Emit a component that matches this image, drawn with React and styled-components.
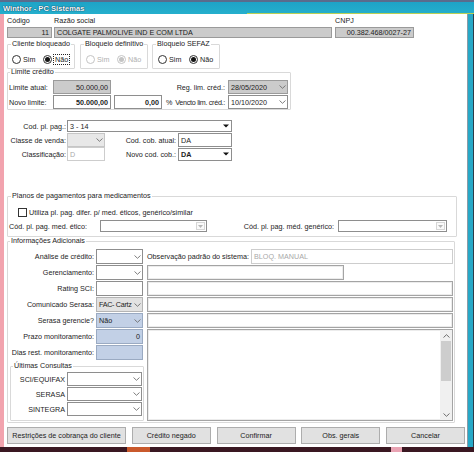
import React from 'react';
import styled, { createGlobalStyle, css } from 'styled-components';

const GlobalStyle = createGlobalStyle`
  html, body { margin: 0; padding: 0; background: #26a6c6; }
  body { font-family: "Liberation Sans", Arial, sans-serif; font-size: 7.2px; color: #1c1c1c; }
  * { box-sizing: border-box; }
`;

const Screen = styled.div`
  width: 474px;
  height: 452px;
  overflow: hidden;
  display: grid;
  grid-template-rows: 14px 433px 5px;
  background: #26a6c6;
`;

const TitleBar = styled.div`
  display: flex;
  align-items: center;
  padding: 2px 0 0 3px;
  background:
    linear-gradient(to right, transparent 247px, #b9cf55 247px) bottom / 100% 1px no-repeat,
    linear-gradient(to bottom, #5a6c8c 0, #5a6c8c 2px, #1ea3c6 2px, #25afcc 100%);
  font-weight: bold;
  font-size: 7.6px;
  color: #f2fbff;
  text-shadow: 0 0 1px #0a3550, 0 0 1px #0a3550;
  white-space: nowrap;
`;

const Body = styled.div`
  display: flex;
`;

const LeftFrame = styled.div`
  width: 4px;
  background: #f2a3ae;
`;

const RightFrame = styled.div`
  width: 7px;
  border-left: 1px solid #8b9ba6;
  border-right: 1px solid #2b3b48;
  background: #27a8c7;
`;

const Client = styled.div`
  width: 463px;
  background: #fff;
  padding: 2px 0 0 3px;
  display: flex;
  flex-direction: column;
`;

const Taskbar = styled.div`
  display: flex;
  background: #3a1822;
`;

const TaskChip = styled.div`
  margin-left: ${p => p.$ml}px;
  width: ${p => p.$w}px;
  background: ${p => p.$c};
`;

/* ---------- generic controls ---------- */

const tones = {
  white: { bg: '#ffffff', bd: '#8e8e8e', fg: '#1c1c1c' },
  gray: { bg: '#cbcbcb', bd: '#9a9a9a', fg: '#1c1c1c' },
  light: { bg: '#e2e2e2', bd: '#b4b4b4', fg: '#1c1c1c' },
  blue: { bg: '#c2d0e6', bd: '#9aaac2', fg: '#1c1c1c' },
  disabled: { bg: '#ffffff', bd: '#cdcdcd', fg: '#a9a9a9' },
  dimmed: { bg: '#e8e8e8', bd: '#c6c6c6', fg: '#a9a9a9' },
  edit: { bg: '#ffffff', bd: '#a4a4a4', fg: '#1c1c1c' },
};

const Box = styled.div`
  flex: ${p => (p.$w ? 'none' : '1')};
  width: ${p => (p.$w ? `${p.$w}px` : 'auto')};
  height: ${p => p.$h || 12}px;
  margin-left: ${p => p.$ml || 0}px;
  border: 1px solid ${p => tones[p.$tone || 'white'].bd};
  background: ${p => tones[p.$tone || 'white'].bg};
  color: ${p => tones[p.$tone || 'white'].fg};
  font-weight: ${p => (p.$bold ? 'bold' : 'normal')};
  display: flex;
  align-items: center;
  justify-content: ${p => (p.$right ? 'flex-end' : 'flex-start')};
  padding: 0 ${p => (p.$combo ? 0 : 2)}px 0 ${p => (p.$combo ? 1 : 2)}px;
  white-space: nowrap;
  overflow: hidden;
  ${p => p.$tone === 'edit' && css`box-shadow: inset 0 0 0 1px #ececec;`}
`;

const ComboText = styled.span`
  flex: 1;
  overflow: hidden;
  padding-left: 1px;
  letter-spacing: ${p => (p.$tight ? '-0.3px' : '0')};
`;

const ArrowSlot = styled.span`
  flex: none;
  width: 10px;
  height: 100%;
  display: flex;
  align-items: center;
  justify-content: center;
  ${p => p.$kind === 'faint' && css`
    width: 9px;
    height: calc(100% - 2px);
    margin-right: 1px;
    border: 1px solid #d6d6d6;
    background: #fafafa;
  `}
`;

const Arrow = ({ kind }) => {
  if (kind === 'button') {
    return (
      <ArrowSlot $kind={kind}>
        <svg width="6" height="4" viewBox="0 0 6 4"><path d="M0 0.5H6L3 3.5Z" fill="#111" /></svg>
      </ArrowSlot>
    );
  }
  if (kind === 'faint') {
    return (
      <ArrowSlot $kind={kind}>
        <svg width="5" height="3" viewBox="0 0 5 3"><path d="M0 0H5L2.5 3Z" fill="#b8b8b8" /></svg>
      </ArrowSlot>
    );
  }
  return (
    <ArrowSlot $kind={kind}>
      <svg width="7" height="4" viewBox="0 0 7 4"><path d="M0.5 0.5L3.5 3.3L6.5 0.5" fill="none" stroke="#6f6f6f" strokeWidth="0.9" /></svg>
    </ArrowSlot>
  );
};

const Combo = ({ w, h, tone, kind = 'chevron', bold, ml, tight, children }) => (
  <Box $w={w} $h={h} $tone={tone} $bold={bold} $ml={ml} $combo>
    <ComboText $tight={tight}>{children}</ComboText>
    <Arrow kind={kind} />
  </Box>
);

const Lbl = styled.span`
  flex: ${p => (p.$w ? 'none' : '1')};
  width: ${p => (p.$w ? `${p.$w}px` : 'auto')};
  margin-left: ${p => p.$ml || 0}px;
  padding-right: ${p => p.$pr || 0}px;
  text-align: ${p => (p.$right ? 'right' : 'left')};
  color: ${p => (p.$dim ? '#a9a9a9' : '#1c1c1c')};
  letter-spacing: ${p => (p.$tight ? '-0.3px' : '0')};
  white-space: nowrap;
`;

const Row = styled.div`
  display: flex;
  align-items: center;
  height: ${p => p.$h}px;
  margin-top: ${p => p.$mt || 0}px;
  padding-left: ${p => p.$pl || 0}px;
  padding-right: ${p => p.$pr || 0}px;
`;

const Group = styled.fieldset`
  margin: ${p => p.$mt || 0}px 0 0 ${p => p.$ml || 0}px;
  padding: ${p => p.$pt || 0}px 0 ${p => p.$pb || 0}px 0;
  width: ${p => p.$w}px;
  min-width: 0;
  border: 1px solid #d9d9d9;
  border-radius: 1px;
  flex: none;
`;

const Legend = styled.legend`
  margin-left: ${p => p.$ml ?? 2}px;
  padding: 0 1px;
  line-height: 6px;
  height: 6px;
  font-size: 7.2px;
  white-space: nowrap;
  color: #1c1c1c;
`;

/* ---------- header ---------- */

const HeaderRow = styled.div`
  display: flex;
`;

const FieldCol = styled.div`
  display: flex;
  flex-direction: column;
  gap: 1px;
  width: ${p => p.$w}px;
  margin-left: ${p => p.$ml || 0}px;
`;

const Caption = styled.div`
  height: 10px;
  line-height: 10px;
  white-space: nowrap;
`;

/* ---------- radios ---------- */

const GroupRow = styled.div`
  display: flex;
  margin-top: 3px;
`;

const RadioLine = styled.div`
  display: flex;
  align-items: center;
  height: 10px;
  padding-left: ${p => p.$pl}px;
`;

const RadioItem = styled.label`
  display: flex;
  align-items: center;
  gap: 2px;
  width: ${p => (p.$w ? `${p.$w}px` : 'auto')};
  color: ${p => (p.$disabled ? '#b0b0b0' : '#1c1c1c')};
`;

const RadioDot = styled.span`
  width: 9px;
  height: 9px;
  border-radius: 50%;
  border: 1px solid ${p => (p.$disabled ? '#c4c4c4' : '#333')};
  background: #fff;
  display: inline-flex;
  align-items: center;
  justify-content: center;
  flex: none;
  &::after {
    content: '';
    width: 5px;
    height: 5px;
    border-radius: 50%;
    background: ${p => (p.$disabled ? '#c4c4c4' : '#141414')};
    display: ${p => (p.$on ? 'block' : 'none')};
  }
`;

const Focus = styled.span`
  outline: 1px dotted #222;
  outline-offset: 0;
  padding: 0 1px;
  line-height: 9px;
`;

const Radio = ({ on, disabled, focus, w, children }) => (
  <RadioItem $disabled={disabled} $w={w}>
    <RadioDot $on={on} $disabled={disabled} />
    {focus ? <Focus>{children}</Focus> : <span>{children}</span>}
  </RadioItem>
);

const RadioGroup = ({ title, ml, pl, active, disabled, focus }) => (
  <Group $w={68} $ml={ml} $pt={7} $pb={4}>
    <Legend $ml={3}>{title}</Legend>
    <RadioLine $pl={pl}>
      <Radio w={31} disabled={disabled} on={active === 'sim'}>Sim</Radio>
      <Radio disabled={disabled} on={active === 'nao'} focus={focus}>Não</Radio>
    </RadioLine>
  </Group>
);

/* ---------- checkbox ---------- */

const CheckBox = styled.span`
  width: 9px;
  height: 9px;
  border: 1px solid #333;
  background: #fff;
  flex: none;
  margin-right: 2px;
`;

/* ---------- info grid ---------- */

const InfoGrid = styled.div`
  display: grid;
  grid-template-columns: 88px 51px 306px;
  grid-template-rows: repeat(7, 15px) auto;
  row-gap: 1px;
`;

const GridLbl = styled.span`
  grid-column: 1;
  text-align: right;
  padding-right: 2px;
  align-self: center;
  white-space: nowrap;
`;

const GridField = styled.div`
  grid-column: 2;
  display: flex;
  width: 47px;
`;

const GridRight = styled.div`
  grid-column: 3;
  display: flex;
  align-items: center;
`;

const Memo = styled.div`
  grid-column: 3;
  grid-row: 6 / span 3;
  height: 92px;
  align-self: start;
  border: 1px solid #a4a4a4;
  box-shadow: inset 0 0 0 1px #ececec;
  background: #fff;
  display: flex;
  justify-content: flex-end;
`;

const ScrollBar = styled.div`
  width: 12px;
  background: #f0f0f0;
  display: flex;
  flex-direction: column;
`;

const ScrollBtn = styled.div`
  height: 11px;
  display: flex;
  align-items: center;
  justify-content: center;
`;

const ScrollTrack = styled.div`
  flex: 1;
  display: flex;
  justify-content: center;
`;

const Thumb = styled.div`
  width: 10px;
  height: 40px;
  background: #cdcdcd;
`;

const Consultas = styled(Group)`
  grid-column: 1 / span 2;
  grid-row: 8;
`;

/* ---------- buttons ---------- */

const ButtonBar = styled.div`
  display: flex;
  justify-content: space-between;
  width: 458px;
  margin-top: 4px;
`;

const Button = styled.button`
  width: ${p => p.$w}px;
  height: 17px;
  padding: 0;
  border: 1px solid #adadad;
  background: #e1e1e1;
  font-family: "Liberation Sans", Arial, sans-serif;
  font-size: 7.2px;
  color: #1c1c1c;
  white-space: nowrap;
`;

export default function App() {
  return (
    <>
      <GlobalStyle />
      <Screen>
        <TitleBar>Winthor - PC Sistemas</TitleBar>
        <Body>
          <LeftFrame />
          <Client>
            <HeaderRow>
              <FieldCol $w={45}>
                <Caption>Código</Caption>
                <Box $tone="gray" $right>11</Box>
              </FieldCol>
              <FieldCol $w={278} $ml={2}>
                <Caption>Razão social</Caption>
                <Box $tone="gray">COLGATE PALMOLIVE IND E COM LTDA</Box>
              </FieldCol>
              <FieldCol $w={79} $ml={3}>
                <Caption>CNPJ</Caption>
                <Box $tone="gray" $right>00.382.468/0027-27</Box>
              </FieldCol>
            </HeaderRow>

            <GroupRow>
              <RadioGroup title="Cliente bloqueado" pl={4} active="nao" focus />
              <RadioGroup title="Bloqueio definitivo" ml={5} pl={5} active="nao" disabled />
              <RadioGroup title="Bloqueio SEFAZ" ml={4} pl={5} active="nao" />
            </GroupRow>

            <Group $w={284} $pt={5} $pb={0}>
              <Legend $ml={2}>Limite crédito</Legend>
              <Row $h={14} $pl={1} $pr={2}>
                <Lbl $w={44}>Limite atual:</Lbl>
                <Box $w={58} $h={14} $tone="gray" $right>50.000,00</Box>
                <Lbl $right $pr={3}>Reg. lim. créd.:</Lbl>
                <Combo w={60} h={14} tone="gray">28/05/2020</Combo>
              </Row>
              <Row $h={14} $mt={1} $pl={1} $pr={2}>
                <Lbl $w={44}>Novo limite:</Lbl>
                <Box $w={58} $h={14} $bold $right>50.000,00</Box>
                <Box $w={48} $h={14} $ml={3} $bold $right>0,00</Box>
                <Lbl $w={6} $ml={4}>%</Lbl>
                <Lbl $right $pr={3} $tight>Vencto lim. créd.:</Lbl>
                <Combo w={60} h={14}>10/10/2020</Combo>
              </Row>
            </Group>

            <Row $h={12} $mt={10}>
              <Lbl $w={60} $right $pr={1}>Cod. pl. pag.:</Lbl>
              <Combo w={165} h={12} kind="button">3 - 14</Combo>
            </Row>
            <Row $h={14} $mt={1}>
              <Lbl $w={60} $right $pr={1}>Classe de venda:</Lbl>
              <Combo w={38} h={14} tone="dimmed"></Combo>
              <Lbl $w={73} $right $pr={2}>Cod. cob. atual:</Lbl>
              <Box $w={54} $h={14}>DA</Box>
            </Row>
            <Row $h={14}>
              <Lbl $w={60} $right $pr={1}>Classificação:</Lbl>
              <Box $w={38} $h={14} $tone="disabled">D</Box>
              <Lbl $w={73} $right $pr={2}>Novo cod. cob.:</Lbl>
              <Combo w={54} h={13} kind="button" bold>DA</Combo>
            </Row>

            <Group $w={450} $mt={32} $pt={8} $pb={4}>
              <Legend $ml={3}>Planos de pagamentos para medicamentos</Legend>
              <Row $h={10} $pl={10}>
                <CheckBox />
                <span>Utiliza pl. pag. difer. p/ med. éticos, genérico/similar</span>
              </Row>
              <Row $h={12} $mt={3} $pl={1} $pr={9}>
                <Lbl $w={91}>Cód. pl. pag. med. ético:</Lbl>
                <Combo w={107} h={12} kind="faint" tone="white"></Combo>
                <Lbl $right $pr={4}>Cód. pl. pag. méd. genérico:</Lbl>
                <Combo w={109} h={12} kind="faint" tone="white"></Combo>
              </Row>
            </Group>

            <Group $w={448} $mt={1} $pt={5} $pb={1}>
              <Legend $ml={2}>Informações Adicionais</Legend>
              <InfoGrid>
                <GridLbl>Análise de crédito:</GridLbl>
                <GridField><Combo w={47} h={15}></Combo></GridField>
                <GridRight>
                  <Lbl $w={104}>Observação padrão do sistema:</Lbl>
                  <Box $h={15} $tone="disabled">BLOQ. MANUAL</Box>
                </GridRight>

                <GridLbl>Gerenciamento:</GridLbl>
                <GridField><Combo w={47} h={15}></Combo></GridField>
                <GridRight><Box $w={197} $h={15} $tone="edit" /></GridRight>

                <GridLbl>Rating SCI:</GridLbl>
                <GridField><Box $w={47} $h={15} /></GridField>
                <GridRight><Box $w={306} $h={15} $tone="edit" /></GridRight>

                <GridLbl>Comunicado Serasa:</GridLbl>
                <GridField><Combo w={47} h={15} tone="light" tight>FAC- Cartz</Combo></GridField>
                <GridRight><Box $w={306} $h={15} $tone="edit" /></GridRight>

                <GridLbl>Serasa gerencie?</GridLbl>
                <GridField><Combo w={47} h={15} tone="blue">Não</Combo></GridField>
                <GridRight><Box $w={306} $h={15} $tone="edit" /></GridRight>

                <GridLbl>Prazo monitoramento:</GridLbl>
                <GridField><Box $w={47} $h={15} $tone="blue" $right>0</Box></GridField>
                <Memo>
                  <ScrollBar>
                    <ScrollBtn>
                      <svg width="7" height="4" viewBox="0 0 7 4"><path d="M0.5 3.5L3.5 0.7L6.5 3.5" fill="none" stroke="#606060" strokeWidth="0.9" /></svg>
                    </ScrollBtn>
                    <ScrollTrack><Thumb /></ScrollTrack>
                    <ScrollBtn>
                      <svg width="7" height="4" viewBox="0 0 7 4"><path d="M0.5 0.5L3.5 3.3L6.5 0.5" fill="none" stroke="#606060" strokeWidth="0.9" /></svg>
                    </ScrollBtn>
                  </ScrollBar>
                </Memo>

                <GridLbl>Dias rest. monitoramento:</GridLbl>
                <GridField><Box $w={47} $h={15} $tone="blue" /></GridField>

                <Consultas $w={134} $ml={2} $mt={2} $pt={3} $pb={2}>
                  <Legend $ml={2}>Últimas Consultas</Legend>
                  <Row $h={14}>
                    <Lbl $w={56} $right $pr={2}>SCI/EQUIFAX</Lbl>
                    <Combo w={75} h={14}></Combo>
                  </Row>
                  <Row $h={14} $mt={1}>
                    <Lbl $w={56} $right $pr={2}>SERASA</Lbl>
                    <Combo w={75} h={14}></Combo>
                  </Row>
                  <Row $h={14} $mt={1}>
                    <Lbl $w={56} $right $pr={2}>SINTEGRA</Lbl>
                    <Combo w={75} h={14}></Combo>
                  </Row>
                </Consultas>
              </InfoGrid>
            </Group>

            <ButtonBar>
              <Button $w={119}>Restrições de cobrança do cliente</Button>
              <Button $w={79}>Crédito negado</Button>
              <Button $w={79}>Confirmar</Button>
              <Button $w={79}>Obs. gerais</Button>
              <Button $w={79}>Cancelar</Button>
            </ButtonBar>
          </Client>
          <RightFrame />
        </Body>
        <Taskbar>
          <TaskChip $ml={127} $w={23} $c="#c9592c" />
          <TaskChip $ml={241} $w={11} $c="#e9a3b3" />
        </Taskbar>
      </Screen>
    </>
  );
}
